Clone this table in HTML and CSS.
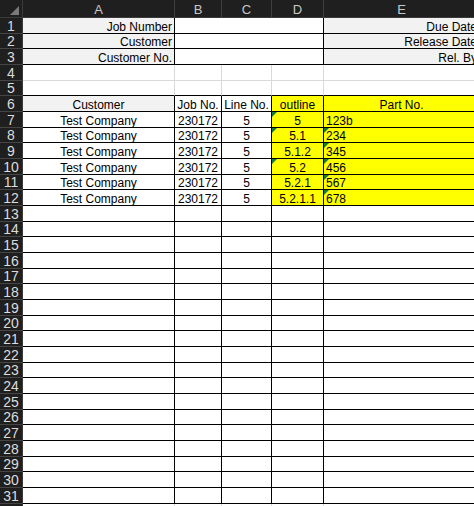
FILE: index.html
```html
<!DOCTYPE html>
<html>
<head>
<meta charset="utf-8">
<link rel="stylesheet" href="styles.css">
</head>
<body>
<div class="sheet">
  <div class="corner"><span class="tri"></span></div>
  <div class="ch">A</div><div class="ch">B</div><div class="ch">C</div><div class="ch">D</div><div class="ch">E</div>

  <div class="rh">1</div><div class="c b g r">Job Number</div><div class="c b span3"></div><div class="c b g r">Due Date</div>
  <div class="rh">2</div><div class="c b g r">Customer</div><div class="c b span3"></div><div class="c b g r">Release Date</div>
  <div class="rh">3</div><div class="c b g r">Customer No.</div><div class="c b span3"></div><div class="c b g r">Rel. By</div>
  <div class="rh">4</div><div class="c"></div><div class="c"></div><div class="c"></div><div class="c"></div><div class="c"></div>
  <div class="rh">5</div><div class="c bb"></div><div class="c bb"></div><div class="c bb"></div><div class="c bb"></div><div class="c bb"></div>

  <div class="rh">6</div><div class="c b g">Customer</div><div class="c b">Job No.</div><div class="c b">Line No.</div><div class="c b y">outline</div><div class="c b y">Part No.</div>
  <div class="rh">7</div><div class="c b">Test Company</div><div class="c b">230172</div><div class="c b">5</div><div class="c b y t">5</div><div class="c b y l">123b</div>
  <div class="rh">8</div><div class="c b">Test Company</div><div class="c b">230172</div><div class="c b">5</div><div class="c b y t">5.1</div><div class="c b y l t">234</div>
  <div class="rh">9</div><div class="c b">Test Company</div><div class="c b">230172</div><div class="c b">5</div><div class="c b y">5.1.2</div><div class="c b y l t">345</div>
  <div class="rh">10</div><div class="c b">Test Company</div><div class="c b">230172</div><div class="c b">5</div><div class="c b y t">5.2</div><div class="c b y l t">456</div>
  <div class="rh">11</div><div class="c b">Test Company</div><div class="c b">230172</div><div class="c b">5</div><div class="c b y">5.2.1</div><div class="c b y l t">567</div>
  <div class="rh">12</div><div class="c b">Test Company</div><div class="c b">230172</div><div class="c b">5</div><div class="c b y">5.2.1.1</div><div class="c b y l t">678</div>

  <div class="rh">13</div><div class="c b"></div><div class="c b"></div><div class="c b"></div><div class="c b"></div><div class="c b"></div>
  <div class="rh">14</div><div class="c b"></div><div class="c b"></div><div class="c b"></div><div class="c b"></div><div class="c b"></div>
  <div class="rh">15</div><div class="c b"></div><div class="c b"></div><div class="c b"></div><div class="c b"></div><div class="c b"></div>
  <div class="rh">16</div><div class="c b"></div><div class="c b"></div><div class="c b"></div><div class="c b"></div><div class="c b"></div>
  <div class="rh">17</div><div class="c b"></div><div class="c b"></div><div class="c b"></div><div class="c b"></div><div class="c b"></div>
  <div class="rh">18</div><div class="c b"></div><div class="c b"></div><div class="c b"></div><div class="c b"></div><div class="c b"></div>
  <div class="rh">19</div><div class="c b"></div><div class="c b"></div><div class="c b"></div><div class="c b"></div><div class="c b"></div>
  <div class="rh">20</div><div class="c b"></div><div class="c b"></div><div class="c b"></div><div class="c b"></div><div class="c b"></div>
  <div class="rh">21</div><div class="c b"></div><div class="c b"></div><div class="c b"></div><div class="c b"></div><div class="c b"></div>
  <div class="rh">22</div><div class="c b"></div><div class="c b"></div><div class="c b"></div><div class="c b"></div><div class="c b"></div>
  <div class="rh">23</div><div class="c b"></div><div class="c b"></div><div class="c b"></div><div class="c b"></div><div class="c b"></div>
  <div class="rh">24</div><div class="c b"></div><div class="c b"></div><div class="c b"></div><div class="c b"></div><div class="c b"></div>
  <div class="rh">25</div><div class="c b"></div><div class="c b"></div><div class="c b"></div><div class="c b"></div><div class="c b"></div>
  <div class="rh">26</div><div class="c b"></div><div class="c b"></div><div class="c b"></div><div class="c b"></div><div class="c b"></div>
  <div class="rh">27</div><div class="c b"></div><div class="c b"></div><div class="c b"></div><div class="c b"></div><div class="c b"></div>
  <div class="rh">28</div><div class="c b"></div><div class="c b"></div><div class="c b"></div><div class="c b"></div><div class="c b"></div>
  <div class="rh">29</div><div class="c b"></div><div class="c b"></div><div class="c b"></div><div class="c b"></div><div class="c b"></div>
  <div class="rh">30</div><div class="c b"></div><div class="c b"></div><div class="c b"></div><div class="c b"></div><div class="c b"></div>
  <div class="rh">31</div><div class="c b"></div><div class="c b"></div><div class="c b"></div><div class="c b"></div><div class="c b"></div>
  <div class="rh"></div><div class="c"></div><div class="c"></div><div class="c"></div><div class="c"></div><div class="c"></div>
</div>
</body>
</html>
```

FILE: styles.css
```css
html, body {
  margin: 0;
  padding: 0;
  background: #ffffff;
  overflow: hidden;
}

.sheet {
  display: grid;
  grid-template-columns: 23px 152px 47px 50px 52px 156px;
  grid-template-rows: 18px repeat(32, 15.68px);
  width: 480px;
  font-family: "Liberation Sans", Arial, sans-serif;
  font-size: 12px;
  color: #000;
}

.corner {
  background: #1f1f1f;
  border-right: 1px solid #3a3a3a;
  border-bottom: 1px solid #3a3a3a;
  box-sizing: border-box;
  position: relative;
}

.corner .tri {
  position: absolute;
  right: 3px;
  bottom: 2px;
  width: 0;
  height: 0;
  border-left: 9px solid transparent;
  border-bottom: 9px solid #7a7a7a;
}

.ch {
  background: #1f1f1f;
  color: #c8c8c8;
  font-size: 13px;
  text-align: center;
  line-height: 19px;
  border-right: 1px solid #3e3e3e;
  border-bottom: 1px solid #3a3a3a;
  box-sizing: border-box;
}

.rh {
  background: #1f1f1f;
  color: #dcdcdc;
  font-size: 14px;
  text-align: center;
  border-right: 1px solid #3a3a3a;
  border-bottom: 1px solid #454545;
  box-sizing: border-box;
  display: flex;
  align-items: flex-end;
  justify-content: center;
  line-height: 14px;
}

.c {
  box-sizing: border-box;
  border-right: 1px solid #d9d9d9;
  border-bottom: 1px solid #d9d9d9;
  display: flex;
  align-items: flex-end;
  justify-content: center;
  padding: 0 2px;
  line-height: 12px;
  white-space: nowrap;
  overflow: hidden;
  position: relative;
  background: #ffffff;
}

.b {
  border-right-color: #000;
  border-bottom-color: #000;
}

.bb {
  border-bottom-color: #000;
}

.g {
  background: #f2f2f2;
}

.y {
  background: #ffff00;
}

.r {
  justify-content: flex-end;
}

.l {
  justify-content: flex-start;
}

.span3 {
  grid-column: span 3;
}

.t::before {
  content: "";
  position: absolute;
  left: 0;
  top: 0;
  width: 0;
  height: 0;
  border-top: 5px solid #1a7a3a;
  border-right: 5px solid transparent;
}
```
